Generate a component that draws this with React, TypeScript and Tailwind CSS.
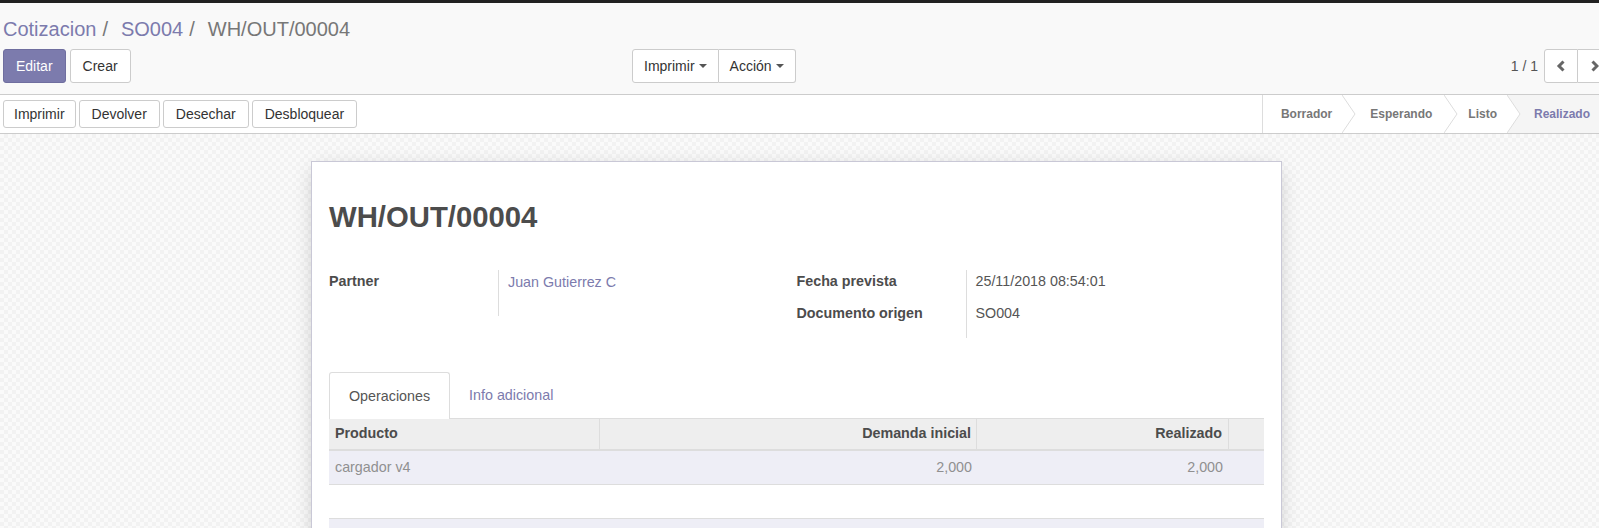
import React from "react";

function Caret() {
  return (
    <span className="ml-[4px] inline-block w-0 h-0 border-l-[4px] border-r-[4px] border-t-[4px] border-l-transparent border-r-transparent border-t-[#555555] align-middle" />
  );
}

function Chevron({ last }: { last?: boolean }) {
  return (
    <svg width="14" height="38" viewBox="0 0 14 38" className="shrink-0 block">
      {last && <polygon points="0,0 14,0 14,38 0,38 13,19" fill="#f5f5f5" />}
      <polyline points="0,0 13,19 0,38" fill="none" stroke="#dddddd" strokeWidth="1" />
    </svg>
  );
}

export default function App() {
  const btn =
    "h-[34px] px-[12px] border border-[#cccccc] rounded-[3px] bg-white text-[#333333] text-[14px] flex items-center";
  const sbtn =
    "h-[28px] border border-[#cccccc] rounded-[3px] bg-white text-[#333333] text-[14px] flex items-center";
  return (
    <div className="w-[1599px] h-[528px] overflow-hidden flex flex-col bg-white text-[14.3px] text-[#4c4c4c] font-['Liberation_Sans',Arial,sans-serif]">
      <div className="h-[3px] bg-[#212121] shrink-0" />

      {/* Control panel */}
      <div className="shrink-0 bg-[#f9f9f9] border-b border-[#cccccc] pt-[11px] pb-[11px] pl-[3px]">
        <div className="h-[30px] leading-[30px] text-[20px] flex items-center whitespace-nowrap">
          <span className="text-[#7c7bad]">Cotizacion</span>
          <span className="ml-[6px] mr-[13px] text-[#777777]">/</span>
          <span className="text-[#7c7bad]">SO004</span>
          <span className="ml-[6px] mr-[13px] text-[#777777]">/</span>
          <span className="text-[#777777]">WH/OUT/00004</span>
        </div>
        <div className="mt-[5px] flex items-center h-[34px] w-[1609px]">
          <div className="w-[629px] flex gap-[4px]">
            <button className="h-[34px] px-[12px] border border-[#6f6e9f] rounded-[3px] bg-[#7c7bad] text-white text-[14px] flex items-center">
              Editar
            </button>
            <button className={btn}>Crear</button>
          </div>
          <div className="flex">
            <button className="h-[34px] px-[11px] border border-[#cccccc] rounded-l-[3px] bg-white text-[#333333] text-[14px] flex items-center">
              Imprimir
              <Caret />
            </button>
            <button className="h-[34px] px-[11px] border border-l-0 border-[#cccccc] rounded-r-[3px] bg-white text-[#333333] text-[14px] flex items-center">
              Acción
              <Caret />
            </button>
          </div>
          <div className="ml-auto flex items-center">
            <span className="mr-[6px] text-[#555555] text-[14px]">1 / 1</span>
            <div className="flex">
              <button className="h-[34px] w-[34px] border border-[#cccccc] rounded-l-[3px] bg-white flex items-center justify-center">
                <svg width="10" height="12" viewBox="0 0 10 12">
                  <polyline points="7.5,1.5 3,6 7.5,10.5" fill="none" stroke="#666666" strokeWidth="3" />
                </svg>
              </button>
              <button className="h-[34px] w-[34px] border border-l-0 border-[#cccccc] rounded-r-[3px] bg-white flex items-center justify-center">
                <svg width="10" height="12" viewBox="0 0 10 12">
                  <polyline points="2.5,1.5 7,6 2.5,10.5" fill="none" stroke="#666666" strokeWidth="3" />
                </svg>
              </button>
            </div>
          </div>
        </div>
      </div>

      {/* Status bar */}
      <div className="shrink-0 h-[39px] bg-white border-b border-[#cccccc] flex justify-between">
        <div className="flex gap-[3px] pl-[3px] pt-[5px] items-start">
          <button className={sbtn + " px-[10px]"}>Imprimir</button>
          <button className={sbtn + " px-[12px]"}>Devolver</button>
          <button className={sbtn + " px-[12px]"}>Desechar</button>
          <button className={sbtn + " px-[12px]"}>Desbloquear</button>
        </div>
        <div className="flex h-[38px] items-stretch border-l border-[#dddddd] text-[12px] font-bold text-[#777777] whitespace-nowrap">
          <span className="pl-[18px] pr-[10px] flex items-center">Borrador</span>
          <Chevron />
          <span className="pl-[14px] pr-[12px] flex items-center">Esperando</span>
          <Chevron />
          <span className="pl-[10px] pr-[10px] flex items-center">Listo</span>
          <Chevron last />
          <span className="pl-[13px] pr-[9px] flex items-center bg-[#f5f5f5] text-[#7c7bad]">Realizado</span>
        </div>
      </div>

      {/* Sheet background */}
      <div className="flex-1 bg-[conic-gradient(#f2f2f2_25%,#fafafa_0_50%,#f2f2f2_0_75%,#fafafa_0)] bg-size-[8px_8px] pt-[27px]">
        <div className="ml-[311px] w-[971px] h-[500px] bg-white border border-[#c9c8d6] shadow-[0_5px_20px_-5px_rgba(0,0,0,0.25)] px-[17px] pt-[39px]">
          <h1 className="text-[29.3px] font-bold leading-[32px] h-[32px] text-[#4c4c4c]">WH/OUT/00004</h1>

          <div className="mt-[37px] flex">
            <div className="w-1/2 flex">
              <div className="w-[170px] h-[46px] border-r border-[#dddddd] font-bold pt-[1px] leading-[20px]">
                Partner
              </div>
              <div className="pl-[9px] pt-[2px] leading-[20px] text-[#7c7bad]">Juan Gutierrez C</div>
            </div>
            <div className="w-1/2 flex">
              <div className="w-[170px] border-r border-[#dddddd] font-bold leading-[20px]">
                <div className="h-[31px] pt-[1px]">Fecha prevista</div>
                <div className="h-[37px] pt-[2px]">Documento origen</div>
              </div>
              <div className="pl-[9px] leading-[20px] text-[#555555]">
                <div className="h-[31px] pt-[1px]">25/11/2018 08:54:01</div>
                <div className="h-[37px] pt-[2px]">SO004</div>
              </div>
            </div>
          </div>

          <div className="mt-[34px] flex h-[47px] border-b border-[#dddddd]">
            <div className="h-[47px] px-[19px] leading-[46px] bg-white border border-b-0 border-[#dddddd] rounded-t-[3px] text-[#555555]">
              Operaciones
            </div>
            <div className="h-[46px] px-[19px] leading-[46px] text-[#7c7bad]">Info adicional</div>
          </div>

          <div className="grid grid-cols-[271px_377px_252px_35px] h-[32px] bg-[#eeeeee] border-b-2 border-[#dddddd] font-bold text-[#4c4c4c]">
            <div className="pl-[6px] flex items-center border-r border-[#dddddd]">Producto</div>
            <div className="pr-[5px] flex items-center justify-end border-r border-[#dddddd]">Demanda inicial</div>
            <div className="pr-[6px] flex items-center justify-end border-r border-[#dddddd]">Realizado</div>
            <div />
          </div>
          <div className="grid grid-cols-[271px_377px_252px_35px] h-[34px] bg-[#eeeef6] border-b border-[#dddddd] text-[#909090]">
            <div className="pl-[6px] flex items-center">cargador v4</div>
            <div className="pr-[5px] flex items-center justify-end">2,000</div>
            <div className="pr-[6px] flex items-center justify-end">2,000</div>
            <div />
          </div>
          <div className="h-[34px] border-b border-[#dddddd]" />
          <div className="h-[40px] bg-[#eeeef6]" />
        </div>
      </div>
    </div>
  );
}
